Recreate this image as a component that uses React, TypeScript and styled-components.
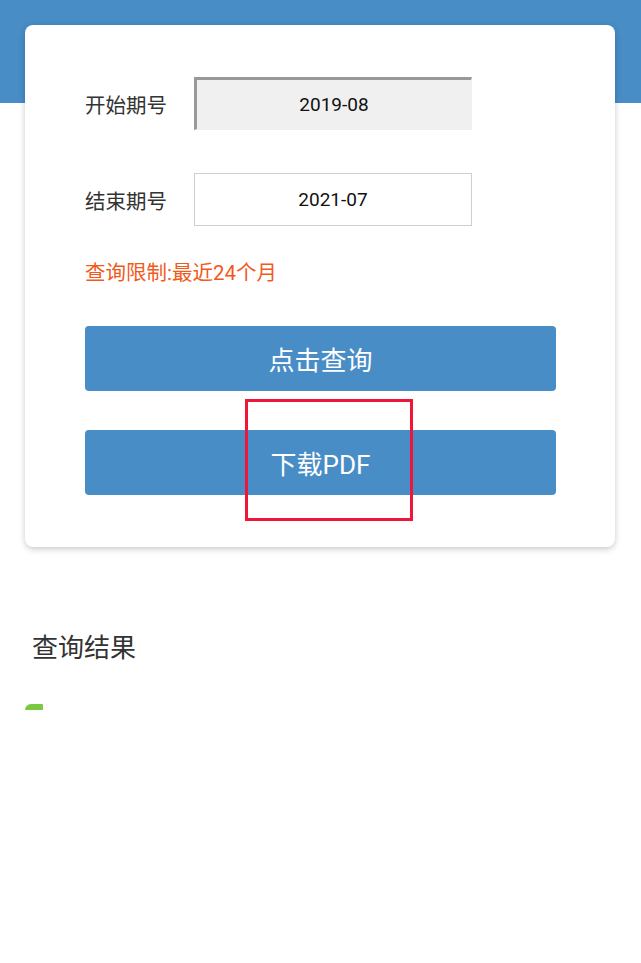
import React from "react";
import styled, { createGlobalStyle } from "styled-components";

const blue = "#488dc6";

const Global = createGlobalStyle`
  html, body {
    margin: 0;
    padding: 0;
    background: #fff;
  }
  body {
    font-family: Roboto, "Noto Sans CJK SC", sans-serif;
    color: #333;
  }
`;

const Top = styled.div`
  padding: 25px 26px 0 25px;
  background: linear-gradient(${blue} 103px, #fff 103px);
`;

const Card = styled.div`
  position: relative;
  background: #fff;
  border-radius: 8px;
  box-shadow: 0 2px 6px rgba(0, 0, 0, 0.22);
  padding: 52px 59px 52px 60px;
  display: flex;
  flex-direction: column;
`;

const Row = styled.div`
  display: flex;
  align-items: center;
  margin-bottom: 43px;
`;

const Label = styled.div`
  width: 109px;
  font-size: 20.5px;
  color: #333;
`;

const DateBox = styled.div<{ $locked?: boolean }>`
  width: 278px;
  height: 53px;
  box-sizing: border-box;
  display: flex;
  align-items: center;
  justify-content: center;
  font-size: 19px;
  color: #111;
  background: ${(p) => (p.$locked ? "#f0f0f0" : "#fff")};
  border: 1px solid ${(p) => (p.$locked ? "#f0f0f0" : "#cfcfcf")};
  ${(p) =>
    p.$locked &&
    `border-top: 3px solid #999; border-left: 3px solid #999;`}
`;

const Notice = styled.div`
  font-size: 20.5px;
  color: #f25a1c;
  margin-top: -13px;
  margin-bottom: 40px;
`;

const Button = styled.div`
  height: 65px;
  border-radius: 4px;
  background: ${blue};
  color: #fff;
  font-size: 26px;
  display: flex;
  align-items: center;
  justify-content: center;
  & + & {
    margin-top: 39px;
  }
`;

const Mark = styled.div`
  position: absolute;
  left: 220px;
  top: 374px;
  width: 168px;
  height: 122px;
  box-sizing: border-box;
  border: 3px solid #f0163a;
`;

const Results = styled.div`
  padding: 80px 32px 0;
  font-size: 26px;
  color: #333;
`;

const GreenTab = styled.div`
  margin: 40px 0 0 25px;
  width: 18px;
  height: 6px;
  background: #7ac943;
  border-radius: 6px 1px 0 0;
`;

const App: React.FC = () => {
  return (
    <>
      <Global />
      <Top>
        <Card>
          <Row>
            <Label>开始期号</Label>
            <DateBox $locked>2019-08</DateBox>
          </Row>
          <Row>
            <Label>结束期号</Label>
            <DateBox>2021-07</DateBox>
          </Row>
          <Notice>查询限制:最近24个月</Notice>
          <Button>点击查询</Button>
          <Button>下载PDF</Button>
          <Mark />
        </Card>
      </Top>
      <Results>查询结果</Results>
      <GreenTab />
    </>
  );
};

export default App;
